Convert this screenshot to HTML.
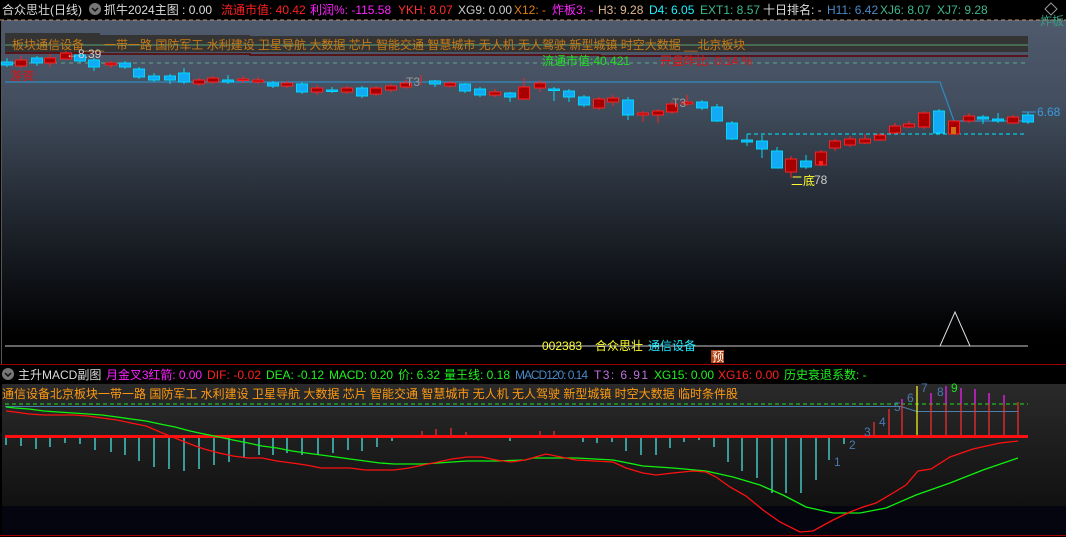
<!DOCTYPE html>
<html><head><meta charset="utf-8"><style>
html,body{margin:0;padding:0;background:#000;width:1066px;height:537px;overflow:hidden}
svg{display:block}
text{font-family:"Liberation Sans","Noto Sans CJK SC",sans-serif;font-size:12px}
</style></head><body>
<svg width="1066" height="537" viewBox="0 0 1066 537" xmlns="http://www.w3.org/2000/svg">
<defs>
<linearGradient id="mg" x1="0" y1="0" x2="0" y2="1">
<stop offset="0" stop-color="#4f5b6d"/><stop offset="0.25" stop-color="#434f5f"/><stop offset="0.55" stop-color="#262d37"/><stop offset="0.85" stop-color="#0c0e12"/><stop offset="1" stop-color="#000"/></linearGradient>
<linearGradient id="sg" x1="0" y1="0" x2="0" y2="1">
<stop offset="0" stop-color="#2a2a2a"/><stop offset="1" stop-color="#111"/></linearGradient>
</defs>
<rect x="0" y="0" width="1066" height="537" fill="#000"/>
<rect x="2" y="20" width="1064" height="320" fill="url(#mg)"/>
<line x1="0" y1="20" x2="1066" y2="20" stroke="#c8946a" stroke-dasharray="4,3"/>
<line x1="1.5" y1="20" x2="1.5" y2="364" stroke="#555"/>
<path d="M5 33 H100 V35 H250 V36 H1028 V52 H5 Z" fill="#343434"/>
<line x1="5" y1="45" x2="1028" y2="45" stroke="#5aa070"/>
<path d="M5 53 H100 V54 H250 V55 H600 V56 H1028" stroke="#5a0000" fill="none" stroke-width="1.5"/>
<text x="12" y="49" fill="#c87a14" font-size="13">板块通信设备___一带一路 国防军工 水利建设 卫星导航 大数据 芯片 智能交通 智慧城市 无人机 无人驾驶 新型城镇 时空大数据 __北京板块</text>
<line x1="5" y1="63" x2="1028" y2="63" stroke="#5aa88a" stroke-dasharray="4,4"/>
<text x="542" y="65" fill="#22e022" font-size="12">流通市值:40.421</text>
<text x="660" y="65" fill="#e01010" font-size="12">开盘昨比: 0.14 %</text>
<text x="1040" y="25" fill="#3a9a80" font-size="10">炸板</text>
<text x="10" y="80" fill="#e01010" font-size="12">游资:</text>
<polyline points="5,82 940,82 954,121 1030,121" fill="none" stroke="#2f8ac0" stroke-width="1.2"/>
<line x1="747" y1="134" x2="1025" y2="134" stroke="#00e8ff" stroke-dasharray="4,3"/>
<g stroke-width="1">
<g stroke="#00d8ff" fill="#12aaf5">
<line x1="7" y1="58" x2="7" y2="67"/><rect x="1.5" y="62" width="11" height="3"/>
<line x1="37" y1="56" x2="37" y2="66"/><rect x="31.5" y="58" width="11" height="5"/>
<line x1="80" y1="53" x2="80" y2="63"/><rect x="74.5" y="55" width="11" height="6"/>
<line x1="94" y1="58" x2="94" y2="71"/><rect x="88.5" y="60" width="11" height="7"/>
<line x1="125" y1="61" x2="125" y2="69"/><rect x="119.5" y="63" width="11" height="4"/>
<line x1="139" y1="67" x2="139" y2="79"/><rect x="133.5" y="69" width="11" height="8"/>
<line x1="154" y1="73" x2="154" y2="82"/><rect x="148.5" y="76" width="11" height="4"/>
<line x1="170" y1="74" x2="170" y2="84"/><rect x="164.5" y="76" width="11" height="4"/>
<line x1="184" y1="68" x2="184" y2="84"/><rect x="178.5" y="73" width="11" height="9"/>
<line x1="228" y1="75" x2="228" y2="84"/><rect x="222.5" y="80" width="11" height="2"/>
<line x1="273" y1="81" x2="273" y2="88"/><rect x="267.5" y="83" width="11" height="3"/>
<line x1="302" y1="82" x2="302" y2="94"/><rect x="296.5" y="84" width="11" height="8"/>
<line x1="332" y1="87" x2="332" y2="93"/><rect x="326.5" y="90" width="11" height="1.5"/>
<line x1="362" y1="86" x2="362" y2="98"/><rect x="356.5" y="88" width="11" height="8"/>
<line x1="435" y1="80" x2="435" y2="87"/><rect x="429.5" y="81" width="11" height="3"/>
<line x1="465" y1="83" x2="465" y2="93"/><rect x="459.5" y="84" width="11" height="7"/>
<line x1="480" y1="87" x2="480" y2="97"/><rect x="474.5" y="89" width="11" height="6"/>
<line x1="510" y1="92" x2="510" y2="102"/><rect x="504.5" y="93" width="11" height="4"/>
<line x1="554" y1="87" x2="554" y2="101"/><rect x="548.5" y="89" width="11" height="1.5"/>
<line x1="569" y1="89" x2="569" y2="102"/><rect x="563.5" y="91" width="11" height="6"/>
<line x1="584" y1="95" x2="584" y2="107"/><rect x="578.5" y="97" width="11" height="8"/>
<line x1="628" y1="97" x2="628" y2="120"/><rect x="622.5" y="100" width="11" height="15"/>
<line x1="702" y1="100" x2="702" y2="110"/><rect x="696.5" y="102" width="11" height="6"/>
<line x1="717" y1="104" x2="717" y2="122"/><rect x="711.5" y="107" width="11" height="14"/>
<line x1="732" y1="121" x2="732" y2="140"/><rect x="726.5" y="123" width="11" height="16"/>
<line x1="747" y1="134" x2="747" y2="146"/><rect x="741.5" y="140" width="11" height="2"/>
<line x1="762" y1="135" x2="762" y2="158"/><rect x="756.5" y="141" width="11" height="8"/>
<line x1="777" y1="147" x2="777" y2="168"/><rect x="771.5" y="151" width="11" height="17"/>
<line x1="806" y1="155" x2="806" y2="169"/><rect x="800.5" y="161" width="11" height="6"/>
<line x1="939" y1="109" x2="939" y2="134"/><rect x="933.5" y="111" width="11" height="22"/>
<line x1="983" y1="115" x2="983" y2="124"/><rect x="977.5" y="117" width="11" height="2"/>
<line x1="998" y1="113" x2="998" y2="123"/><rect x="992.5" y="119" width="11" height="2"/>
<line x1="1028" y1="112" x2="1028" y2="124"/><rect x="1022.5" y="115" width="11" height="7"/>
</g>
<g stroke="#ff2020" fill="#a80000">
<line x1="21" y1="56" x2="21" y2="68"/><rect x="15.5" y="60" width="11" height="6"/>
<line x1="50" y1="54" x2="50" y2="67"/><rect x="44.5" y="58" width="11" height="5"/>
<line x1="66" y1="51" x2="66" y2="60"/><rect x="60.5" y="53" width="11" height="6"/>
<line x1="111" y1="61" x2="111" y2="68"/><rect x="105.5" y="63" width="11" height="2"/>
<line x1="199" y1="78" x2="199" y2="86"/><rect x="193.5" y="80" width="11" height="4"/>
<line x1="213" y1="76" x2="213" y2="84"/><rect x="207.5" y="78" width="11" height="4"/>
<line x1="243" y1="76" x2="243" y2="83"/><rect x="237.5" y="79" width="11" height="1.5"/>
<line x1="258" y1="77" x2="258" y2="84"/><rect x="252.5" y="80" width="11" height="2"/>
<line x1="287" y1="81" x2="287" y2="88"/><rect x="281.5" y="83" width="11" height="3"/>
<line x1="317" y1="85" x2="317" y2="95"/><rect x="311.5" y="88" width="11" height="4"/>
<line x1="347" y1="86" x2="347" y2="94"/><rect x="341.5" y="88" width="11" height="4"/>
<line x1="376" y1="86" x2="376" y2="96"/><rect x="370.5" y="88" width="11" height="6"/>
<line x1="391" y1="84" x2="391" y2="92"/><rect x="385.5" y="86" width="11" height="4"/>
<line x1="406" y1="80" x2="406" y2="89"/><rect x="400.5" y="83" width="11" height="4"/>
<line x1="421" y1="75" x2="421" y2="85"/>
<line x1="450" y1="81" x2="450" y2="88"/><rect x="444.5" y="83" width="11" height="3"/>
<line x1="495" y1="89" x2="495" y2="97"/><rect x="489.5" y="92" width="11" height="3"/>
<line x1="524" y1="78" x2="524" y2="100"/><rect x="518.5" y="87" width="11" height="12"/>
<line x1="540" y1="80" x2="540" y2="92"/><rect x="534.5" y="83" width="11" height="5"/>
<line x1="599" y1="97" x2="599" y2="110"/><rect x="593.5" y="99" width="11" height="9"/>
<line x1="613" y1="95" x2="613" y2="106"/><rect x="607.5" y="98" width="11" height="4"/>
<line x1="643" y1="111" x2="643" y2="122"/><rect x="637.5" y="113" width="11" height="2"/>
<line x1="658" y1="109" x2="658" y2="123"/><rect x="652.5" y="111" width="11" height="4"/>
<line x1="672" y1="101" x2="672" y2="114"/><rect x="666.5" y="104" width="11" height="8"/>
<line x1="687" y1="95" x2="687" y2="106"/><rect x="681.5" y="102" width="11" height="2"/>
<line x1="791" y1="156" x2="791" y2="178"/><rect x="785.5" y="159" width="11" height="13"/>
<line x1="821" y1="150" x2="821" y2="166"/><rect x="815.5" y="152" width="11" height="13"/>
<line x1="835" y1="139" x2="835" y2="151"/><rect x="829.5" y="141" width="11" height="7"/>
<line x1="850" y1="136" x2="850" y2="147"/><rect x="844.5" y="139" width="11" height="6"/>
<line x1="865" y1="134" x2="865" y2="144"/><rect x="859.5" y="139" width="11" height="4"/>
<line x1="880" y1="133" x2="880" y2="141"/><rect x="874.5" y="135" width="11" height="5"/>
<line x1="895" y1="123" x2="895" y2="134"/><rect x="889.5" y="126" width="11" height="7"/>
<line x1="909" y1="121" x2="909" y2="128"/><rect x="903.5" y="124" width="11" height="3"/>
<line x1="924" y1="111" x2="924" y2="129"/><rect x="918.5" y="113" width="11" height="14"/>
<line x1="954" y1="121" x2="954" y2="135"/><rect x="948.5" y="121" width="11" height="13"/>
<line x1="969" y1="113" x2="969" y2="123"/><rect x="963.5" y="116" width="11" height="5"/>
<line x1="1013" y1="115" x2="1013" y2="124"/><rect x="1007.5" y="117" width="11" height="6"/>
</g>
</g>
<rect x="951" y="127" width="5" height="7" fill="#d07010"/>
<rect x="819" y="161" width="4" height="4" fill="#ff2020"/>
<line x1="1022" y1="112" x2="1036" y2="112" stroke="#3a9ae0"/>
<text x="1037" y="116" fill="#3a9ae0" font-size="12">6.68</text>
<text x="66" y="58" fill="#ccc" font-size="11">←8.39</text>
<text x="406" y="86" fill="#999" font-size="11">T3</text>
<text x="672" y="107" fill="#999" font-size="11">T3</text>
<text x="791" y="185" fill="#ffff30" font-size="11">二底</text><text x="814" y="184" fill="#ccc" font-size="11">78</text>
<line x1="5" y1="346" x2="1028" y2="346" stroke="#ccc"/>
<polyline points="940,346 955,312 970,346" fill="none" stroke="#ddd"/>
<text x="542" y="350" fill="#ffff30" font-size="12">002383</text>
<text x="595" y="350" fill="#ffff30" font-size="12">合众思壮</text>
<text x="648" y="350" fill="#20e8ff" font-size="12">通信设备</text>
<rect x="711" y="350" width="13" height="13" fill="#b04010"/><text x="712" y="361" fill="#fff" font-size="11">预</text>
<line x1="0" y1="364.5" x2="1066" y2="364.5" stroke="#a00000"/>
<rect x="2" y="384" width="1064" height="122" fill="url(#sg)"/>
<rect x="2" y="506" width="1064" height="29" fill="#05050f"/>
<line x1="0" y1="535.5" x2="1066" y2="535.5" stroke="#a00000"/>
<text x="2" y="398" fill="#ff9a10" font-size="12">通信设备北京板块一带一路 国防军工 水利建设 卫星导航 大数据 芯片 智能交通 智慧城市 无人机 无人驾驶 新型城镇 时空大数据 临时条件股</text>
<line x1="5" y1="404" x2="1028" y2="404" stroke="#20e020" stroke-dasharray="4,3"/>
<polyline points="5,406.5 901,406.5 917,411.5 1018,411.5" fill="none" stroke="#4a80b0"/>
<g stroke="#50f0f0" stroke-width="1.2">
<line x1="6" y1="437" x2="6" y2="445"/><line x1="21" y1="437" x2="21" y2="446"/><line x1="36" y1="437" x2="36" y2="449"/><line x1="50" y1="437" x2="50" y2="447"/><line x1="65" y1="437" x2="65" y2="443"/><line x1="80" y1="437" x2="80" y2="444"/><line x1="95" y1="437" x2="95" y2="450"/><line x1="111" y1="437" x2="111" y2="452"/><line x1="125" y1="437" x2="125" y2="455"/><line x1="139" y1="437" x2="139" y2="461"/><line x1="154" y1="437" x2="154" y2="467"/><line x1="169" y1="437" x2="169" y2="469"/><line x1="184" y1="437" x2="184" y2="471"/><line x1="199" y1="437" x2="199" y2="469"/><line x1="214" y1="437" x2="214" y2="465"/><line x1="229" y1="437" x2="229" y2="462"/><line x1="244" y1="437" x2="244" y2="458"/><line x1="259" y1="437" x2="259" y2="455"/><line x1="273" y1="437" x2="273" y2="455"/><line x1="287" y1="437" x2="287" y2="453"/><line x1="302" y1="437" x2="302" y2="455"/><line x1="318" y1="437" x2="318" y2="455"/><line x1="333" y1="437" x2="333" y2="453"/><line x1="348" y1="437" x2="348" y2="450"/><line x1="362" y1="437" x2="362" y2="451"/><line x1="377" y1="437" x2="377" y2="447"/><line x1="392" y1="437" x2="392" y2="441"/><line x1="510" y1="437" x2="510" y2="441"/>
<line x1="583" y1="437" x2="583" y2="442"/><line x1="597" y1="437" x2="597" y2="443"/><line x1="612" y1="437" x2="612" y2="442"/><line x1="626" y1="437" x2="626" y2="451"/><line x1="641" y1="437" x2="641" y2="455"/><line x1="656" y1="437" x2="656" y2="455"/><line x1="670" y1="437" x2="670" y2="448"/><line x1="684" y1="437" x2="684" y2="442"/><line x1="699" y1="437" x2="699" y2="440"/><line x1="714" y1="437" x2="714" y2="447"/><line x1="728" y1="437" x2="728" y2="462"/><line x1="742" y1="437" x2="742" y2="471"/><line x1="757" y1="437" x2="757" y2="478"/><line x1="772" y1="437" x2="772" y2="493"/><line x1="786" y1="437" x2="786" y2="493"/><line x1="801" y1="437" x2="801" y2="493"/><line x1="816" y1="437" x2="816" y2="480"/><line x1="829" y1="437" x2="829" y2="460"/><line x1="844" y1="437" x2="844" y2="444"/>
</g>
<g stroke="#ff3030" stroke-width="1.2">
<line x1="422" y1="436" x2="422" y2="431"/><line x1="436" y1="436" x2="436" y2="429"/><line x1="451" y1="436" x2="451" y2="428"/><line x1="466" y1="436" x2="466" y2="432"/><line x1="540" y1="436" x2="540" y2="431"/><line x1="554" y1="436" x2="554" y2="431"/>
<line x1="874" y1="436" x2="874" y2="422"/><line x1="889" y1="436" x2="889" y2="409"/><line x1="902" y1="436" x2="902" y2="404"/><line x1="931" y1="436" x2="931" y2="404"/><line x1="946" y1="436" x2="946" y2="404"/><line x1="961" y1="436" x2="961" y2="404"/><line x1="975" y1="436" x2="975" y2="404"/><line x1="989" y1="436" x2="989" y2="404"/><line x1="1004" y1="436" x2="1004" y2="404"/><line x1="1018" y1="436" x2="1018" y2="402"/>
</g>
<g stroke="#ff20ff" stroke-width="1.2">
<line x1="902" y1="404" x2="902" y2="399"/><line x1="931" y1="404" x2="931" y2="393"/><line x1="946" y1="404" x2="946" y2="386"/><line x1="961" y1="404" x2="961" y2="388"/><line x1="975" y1="404" x2="975" y2="389"/><line x1="989" y1="404" x2="989" y2="393"/><line x1="1004" y1="404" x2="1004" y2="395"/>
</g>
<line x1="917" y1="436" x2="917" y2="386" stroke="#ffff20" stroke-width="1.2"/>
<line x1="5" y1="436.5" x2="1028" y2="436.5" stroke="#ff1010" stroke-width="3"/>
<g fill="#4a7ab0" font-size="12">
<text x="834" y="466">1</text><text x="849" y="449">2</text><text x="864" y="436">3</text><text x="879" y="426">4</text><text x="894" y="411">5</text><text x="907" y="402">6</text><text x="921" y="392">7</text><text x="937" y="396">8</text>
</g>
<text x="951" y="392" fill="#20e020" font-size="12">9</text>
<polyline fill="none" stroke="#10f010" stroke-width="1.3" points="6,407 15,408 29,409 44,411 58,412 73,413 88,414 102,415 117,417 131,419 146,421 160,424 175,427 190,431 204,434 219,437 233,440 248,443 262,446 277,448 292,451 306,453 321,455 336,457 350,459 365,461 380,463 394,464 423,464 438,463 452,462 467,461 496,461 525,460 533,458 576,458 613,460 643,466 673,468 706,471 733,477 760,485 783,495 806,507 833,513 860,513 886,508 916,495 950,483 983,470 1018,458"/>
<polyline fill="none" stroke="#ff1010" stroke-width="1.3" points="6,411 15,412 29,414 44,415 73,415 88,416 102,418 117,420 131,423 146,426 160,432 175,438 190,444 204,449 219,453 233,456 248,458 262,458 277,461 292,463 306,465 321,468 350,468 365,470 394,470 409,468 423,465 438,462 452,459 467,457 482,457 496,460 511,462 525,460 546,454 576,460 613,462 626,468 643,473 656,475 673,473 693,471 706,472 716,477 730,487 746,496 763,510 780,522 800,532 813,531 833,520 850,512 863,507 876,503 893,493 906,485 918,471 931,469 950,457 973,449 1000,443 1018,441"/>
<text x="2" y="14" fill="#ddd" font-size="13">合众思壮(日线)</text>
<circle cx="95" cy="9" r="6" fill="#777"/><path d="M92 8 L95 11 L98 8" stroke="#111" stroke-width="1.5" fill="none"/>
<text x="104" y="14" fill="#ddd" font-size="13">抓牛2024主图 : 0.00</text>
<text x="221" y="14" fill="#ff2020" font-size="13">流通市值: 40.42</text>
<text x="310" y="14" fill="#ff20ff" font-size="13">利润%: -115.58</text>
<text x="398" y="14" fill="#ff3030" font-size="13">YKH: 8.07</text>
<text x="458" y="14" fill="#ccc" font-size="13">XG9: 0.00</text>
<text x="514" y="14" fill="#e08010" font-size="13">X12: -</text>
<text x="552" y="14" fill="#ff20ff" font-size="13">炸板3: -</text>
<text x="598" y="14" fill="#e0b890" font-size="13">H3: 9.28</text>
<text x="649" y="14" fill="#20f0ff" font-size="13">D4: 6.05</text>
<text x="700" y="14" fill="#40b890" font-size="13">EXT1: 8.57</text>
<text x="763" y="14" fill="#ddd" font-size="13">十日排名: -</text>
<text x="827" y="14" fill="#4a8ac8" font-size="13">H11: 6.42</text>
<text x="880" y="14" fill="#40b890" font-size="13">XJ6: 8.07</text>
<text x="937" y="14" fill="#40b890" font-size="13">XJ7: 9.28</text>
<path d="M1051 3 L1057 9 L1051 15 L1045 9 Z" stroke="#999" fill="none"/>
<circle cx="8" cy="374" r="6" fill="#777"/><path d="M5 373 L8 376 L11 373" stroke="#111" stroke-width="1.5" fill="none"/>
<text x="18" y="379" fill="#ddd" font-size="13">主升MACD副图</text>
<text x="106" y="379" fill="#ff20ff" font-size="12" textLength="96">月金叉3红箭: 0.00</text>
<text x="207" y="379" fill="#ff2020" font-size="12" textLength="54">DIF: -0.02</text>
<text x="266" y="379" fill="#20f020" font-size="12" textLength="58">DEA: -0.12</text>
<text x="329" y="379" fill="#20f020" font-size="12" textLength="64">MACD: 0.20</text>
<text x="398" y="379" fill="#20f020" font-size="12" textLength="42">价: 6.32</text>
<text x="444" y="379" fill="#20f020" font-size="12" textLength="66">量王线: 0.18</text>
<text x="515" y="379" fill="#4a8ac8" font-size="12" textLength="73">MACD120: 0.14</text>
<text x="594" y="379" fill="#c070e0" font-size="12" textLength="54">T3: 6.91</text>
<text x="654" y="379" fill="#20f020" font-size="12" textLength="60">XG15: 0.00</text>
<text x="718" y="379" fill="#ff2020" font-size="12" textLength="61">XG16: 0.00</text>
<text x="784" y="379" fill="#20f020" font-size="12">历史衰退系数: -</text>
</svg>
</body></html>
